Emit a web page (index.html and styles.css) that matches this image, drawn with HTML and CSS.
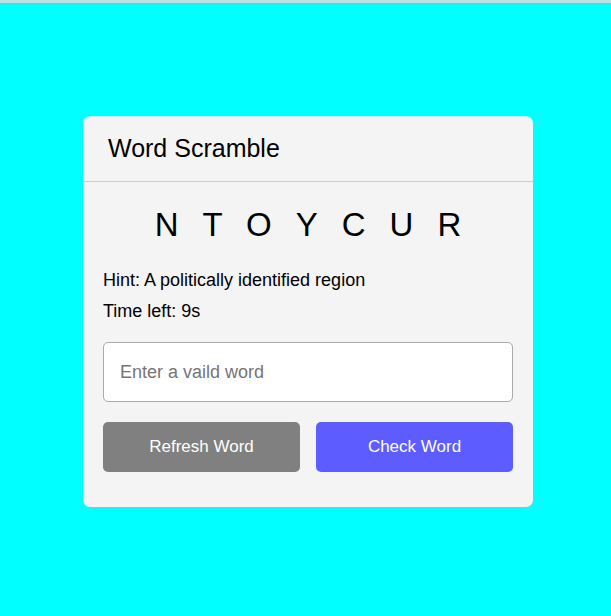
FILE: index.html
```html
<!DOCTYPE html>
<html lang="en">
<head>
<meta charset="utf-8">
<title>Word Scramble</title>
<link rel="stylesheet" href="styles.css">
</head>
<body>
<div class="topbar"></div>
<main class="stage">
  <section class="card">
    <header class="card-head">Word Scramble</header>
    <div class="card-body">
      <p class="letters">NTOYCUR</p>
      <p class="info">Hint: A politically identified region</p>
      <p class="info">Time left: 9s</p>
      <input class="word-input" type="text" placeholder="Enter a vaild word">
      <div class="actions">
        <button class="btn btn-refresh">Refresh Word</button>
        <button class="btn btn-check">Check Word</button>
      </div>
    </div>
  </section>
</main>
</body>
</html>
```
FILE: styles.css
```css
html, body {
  margin: 0;
  padding: 0;
}
body {
  background: #00ffff;
  font-family: "Liberation Sans", Arial, sans-serif;
  color: #000;
}
.topbar {
  height: 3px;
  background: #b8e1e6;
  border-bottom: 1px solid #9fb7bb;
}
.stage {
  display: flex;
  justify-content: center;
  align-items: flex-start;
  padding: 112px 0 0 5px;
}
.card {
  width: 450px;
  background: #f4f4f4;
  border-radius: 7px;
}
.card-head {
  font-size: 25px;
  padding: 18px 25px 19px 25px;
  border-bottom: 1px solid #cccccc;
  line-height: 28px;
}
.card-body {
  padding: 24px 20px 35px 20px;
}
.letters {
  margin: 0 -24px 26px 0;
  text-align: center;
  font-size: 33px;
  letter-spacing: 24px;
  line-height: 38px;
}
.info {
  margin: 0 0 10px 0;
  font-size: 18px;
  line-height: 21px;
}
.word-input {
  display: block;
  box-sizing: border-box;
  width: 100%;
  height: 60px;
  margin-top: 20px;
  padding: 0 16px;
  border: 1px solid #aaaaaa;
  border-radius: 5px;
  background: #fff;
  font-family: "Liberation Sans", Arial, sans-serif;
  font-size: 18px;
  outline: none;
}
.word-input::placeholder {
  color: #757575;
}
.actions {
  display: flex;
  gap: 16px;
  margin-top: 20px;
}
.btn {
  flex: 1;
  height: 50px;
  border: none;
  border-radius: 5px;
  color: #fff;
  font-family: "Liberation Sans", Arial, sans-serif;
  font-size: 17px;
  cursor: pointer;
}
.btn-refresh {
  background: #808080;
}
.btn-check {
  background: #5c5cff;
}
```
